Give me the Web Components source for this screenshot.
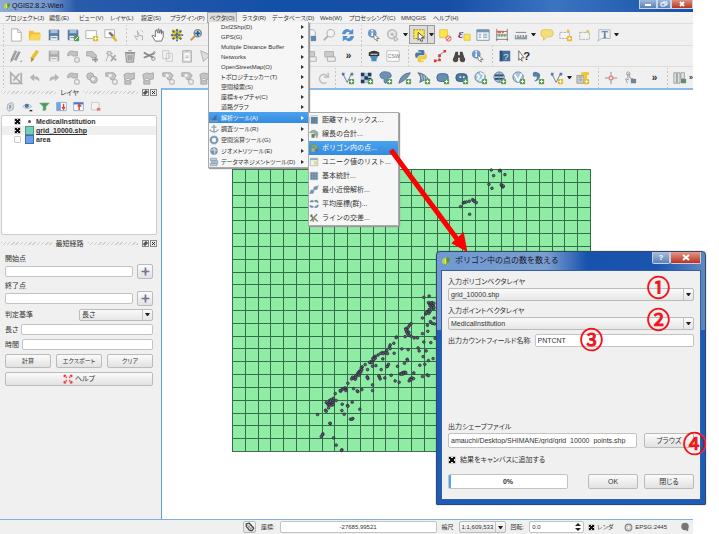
<!DOCTYPE html>
<html lang="ja">
<head>
<meta charset="utf-8">
<title>QGIS2.8.2-Wien</title>
<style>
body{margin:0;background:#fff;color:#333;font:7px/10px "Liberation Sans","Noto Sans CJK JP",sans-serif;font-feature-settings:"palt"}
</style>
</head>
<body>
<qgis-desktop></qgis-desktop>
<script>
const base = `*{box-sizing:border-box}
button,input,select{font:inherit;font-feature-settings:inherit;color:inherit;margin:0;padding:0;border:0;background:none;min-width:0;border-radius:0;outline:0}
select{appearance:none}
input[type=text],.line{background:#fff;border:1px solid #c3c3c3;border-radius:2px;padding:0 2px}
.push{background:linear-gradient(#fbfbfb,#e2e2e2);border:1px solid #bbb;border-radius:2px;display:flex;align-items:center;justify-content:center;gap:2px}
input[type=checkbox]{appearance:none;width:8px;height:8px;flex:none;background:#fff;border:1px solid #ccc;border-radius:1px}
input[type=checkbox]:checked{background:#eee linear-gradient(45deg,transparent 38%,#111 38% 62%,transparent 62%);position:relative}
input[type=checkbox]:checked::after{content:"";position:absolute;inset:0;background:linear-gradient(-45deg,transparent 38%,#111 38% 62%,transparent 62%)}
svg{display:block;flex:none}`;
function define(name, css, html) {
  const template = document.createElement('template');
  customElements.define(name, class extends HTMLElement {
    connectedCallback() {
      if (this.shadowRoot) return;
      template.innerHTML = `<style>${base}${css}</style>${typeof html === 'function' ? html(this) : html}`;
      this.attachShadow({mode: 'open'}).append(template.content.cloneNode(true));
    }
  });
}

/* ---------- icon drawings, all on a 16 x 16 box ---------- */
const plus = '<rect x="9" y="9" width="6" height="6" rx="1" fill="#5c9a58"/><path d="M12 10v4M10 12h4" stroke="#fff"/>';
const star = '<rect x="9" y="9" width="6" height="6" rx="1" fill="#e2b92c"/><path d="M12 10v4M10 12h4" stroke="#fff"/>';
const gbadge = '<rect x="10" y="10" width="5" height="5" rx="1" fill="#eee" stroke="#a2a2a2"/>';
const gblob = 'fill="#c3c3c3" stroke="#a5a5a5"';
const glass = c => `<path d="M7 9L2 14" stroke="${c}" stroke-width="2.4"/><circle cx="10" cy="6" r="4.3" fill="#eef4f8" stroke="${c}" stroke-width="1.3"/>`;
const floppy = (a, b) => `<path d="M2 2h12v12H2z" fill="${a}"/><path d="M4 2h8v4H4z" fill="${b}"/><path d="M4 9h8v5H4z" fill="#eee"/><path d="M5 11h6" stroke="${a}"/>`;
const globe = '<circle cx="7" cy="7" r="6" fill="#a9c4dc" stroke="#6585a5"/>';
const icons = {
  blank: '<path d="M3 1h7l4 4v10H3z" fill="#fff" stroke="#aaa"/><path d="M10 1v4h4" fill="none" stroke="#aaa"/>',
  folder: '<path d="M1 3h5l1 2h7v9H1z" fill="#efc036"/><path d="M4 7h11l-2 7H1z" fill="#fbd559"/>',
  save: floppy('#587ba4', '#a8c2da'),
  saveas: floppy('#587ba4', '#a8c2da') + '<rect x="9" y="9" width="6" height="6" rx="1" fill="#559d55"/><path d="M10 14l4-4" stroke="#fff"/>',
  composer: '<path d="M1 3h12v9H1z" fill="#fff" stroke="#aaa"/>' + star,
  manager: '<path d="M1 2h11v9H1z" fill="#fff" stroke="#aaa"/><path d="M6 5l5 5" stroke="#777" stroke-width="3"/><path d="M10 9l4 6" stroke="#e2b92c" stroke-width="3"/>',
  touch: '<path d="M6 14L3 9l4 1-1-7 2 5 4 1v5" fill="#eee" stroke="#aaa"/><path d="M10 2l3 3" stroke="#bbb"/>',
  hand: '<path d="M5 15L1 9l1-1 3 2V3l1-1 2 4V1h1l1 5 1-4h1v5l1-3h1v6l-2 5z" fill="#fff" stroke="#666"/>',
  panto: '<path d="M2 2h11v11H2z" fill="#f2cc2f"/><path d="M8 1v14M1 8h14M3 3l3 3M13 3l-3 3M3 13l3-3M13 13l-3-3" stroke="#416c9b" stroke-width="2" stroke-dasharray="3 1"/>',
  zoomin: glass('#c69849') + '<circle cx="10" cy="6" r="4" fill="#dceaf4" stroke="#5778a0"/><path d="M10 3v6M7 6h6" stroke="#235b91" stroke-width="2"/>',
  zoomlast: glass('#a8bccd') + '<path d="M9 9h6v6H9z" fill="#6288ab"/>',
  zoomgray: glass('#b5b5b5'),
  refresh: '<path d="M1 7q1-6 7-6l3 2 3-2v6H8l2-2q-3-2-5 2zM15 9q-1 6-7 6l-3-2-3 2V9h6l-2 2q3 2 5-2z" fill="#5791cc"/>',
  identify: '<circle cx="6" cy="6" r="5" fill="#6d99c5"/><path d="M6 5v4M6 2v2" stroke="#fff" stroke-width="2"/><path d="M8 7l6 5-3 0 1 3-4-3z" fill="#fff" stroke="#777"/>',
  runact: '<circle cx="7" cy="7" r="5" fill="none" stroke="#bbb" stroke-width="2"/><circle cx="7" cy="7" r="2" fill="#bbb"/><path d="M9 9l5 4-4 2z" fill="#ddd" stroke="#aaa"/>',
  select: '<path d="M2 2h12v10H2z" fill="#ffe752" stroke="#8c7b34" stroke-dasharray="2 1"/><path d="M7 5l7 6-3 0 1 4-2 0-1-3-2 2z" fill="#fff" stroke="#444"/>',
  desel: '<path d="M2 2h9v9H2z" fill="#ffe44a" stroke="#ddc449"/><circle cx="12" cy="12" r="3" fill="#f4d5d0" stroke="#dd5b55"/><path d="M10 14l4-4" stroke="#dd5b55"/>',
  expr: '<path d="M8 7h7v7H8z" fill="#ffe44a" stroke="#ddc449"/><text x="1" y="11" font-family="Liberation Serif" font-style="italic" font-weight="bold" font-size="15" fill="#664071">ε</text>',
  table: '<path d="M1 2h14v12H1z" fill="#fff" stroke="#6d8ba5"/><path d="M1 2h14v3H1z" fill="#7396b3"/><path d="M3 7h3M8 7h5M3 9h3M8 9h5M3 11h3M8 11h5" stroke="#7898b4"/>',
  abacus: '<path d="M2 1v14M14 1v14M2 4h12M2 8h12M1 13h14" stroke="#777"/><path d="M4 3v3M6 3v3M9 3v3" stroke="#e35b54" stroke-width="2"/><path d="M5 7v3M8 7v3M11 7v3" stroke="#68ad67" stroke-width="2"/>',
  ruler: '<path d="M1 8h14v5H1z" fill="#8e9ba4"/><path d="M3 8v3M6 8v2M9 8v3M12 8v2" stroke="#fff"/><path d="M2 5h12" stroke="#777"/>',
  tip: '<path d="M4 2h8q3 0 3 4t-3 4H8l-4 4v-4q-3 0-3-4t3-4z" fill="#f7df77" stroke="#dbc058"/>',
  bookm: '<path d="M1 5h11v7H1z" fill="#f3f3f3" stroke="#aaa" stroke-dasharray="3 1"/><path d="M9 2h3v3H9z" fill="#e4c14a"/>' + star,
  books: '<path d="M2 5h11v8H2z" fill="#f3f3f3" stroke="#aaa" stroke-dasharray="3 1"/><path d="M10 2l3 1-1 3-3-1z" fill="#e4c14a"/>',
  text: '<path d="M2 2h13v10H5l-4 3 1-3z" fill="#edf2f7" stroke="#a8b2bd"/><text x="5" y="11" font-family="Liberation Serif" font-weight="bold" font-size="11" fill="#597591">T</text>',
  pencils: '<path d="M3 13L8 2M7 13L12 3" stroke="#a0a0a0" stroke-width="3"/><path d="M2 15l1-3M13 14h2" stroke="#777"/>',
  pencil: '<path d="M4 12L11 2" stroke="#e5c330" stroke-width="4"/><path d="M3 15l1-5 3 2z" fill="#a88645"/>',
  gsave: floppy('#aaa', '#ccc'),
  gadd: `<path d="M2 5q2-4 8-2h3v5H8q-2-3-6 0z" ${gblob}/>` + gbadge,
  gmove: `<path d="M2 3h7l4 4v3H8L5 8H2z" ${gblob}/><path d="M8 12h7M12 9v6" stroke="#999" stroke-width="2"/>`,
  gnode: '<path d="M2 5h8M6 5L2 14M6 5l7 8" stroke="#aaa" fill="none"/><path d="M4 3h4v4H4z" fill="#ddd" stroke="#aaa"/><path d="M8 8l6 5M13 7l-5 7" stroke="#aaa" stroke-width="2"/>',
  trash: '<path d="M3 5h10l-1 10H4z" fill="#ccc" stroke="#888"/><path d="M2 4h12M6 2h4M6 7v6M8 7v6M10 7v6" stroke="#888"/>',
  cut: '<path d="M2 4l11 6M2 10l12-5" stroke="#888" stroke-width="2"/><circle cx="13" cy="11" r="2" fill="none" stroke="#888"/><circle cx="14" cy="4" r="1" fill="none" stroke="#888"/>',
  copy: '<path d="M2 2h7v9H2zM6 5h7v9H6z" fill="#f3f3f3" stroke="#c2c2c2"/><path d="M8 8h3M8 10h3" stroke="#ccc"/>',
  paste: '<path d="M3 2h10v13H3z" fill="#ddd" stroke="#aaa"/><path d="M5 5h6v8H5z" fill="#fff"/><path d="M6 2h4M6 8h4M6 10h4" stroke="#aaa"/>',
  gtri: '<path d="M2 2l11 5-8 7z" fill="#ddd" stroke="#aaa"/><path d="M12 2v12" stroke="#aaa"/>',
  label: '<path d="M2 3h10v6H2z" fill="#ccc" stroke="#aaa"/><path d="M5 9h9v5H5z" fill="#eee" stroke="#aaa"/>',
  db: '<path d="M2 4q6-4 12 0v4H2z" fill="#373737"/><path d="M3 8h10l-2 3v3H5v-3z" fill="#4a8bbd"/><path d="M4 6h8" stroke="#fff"/>',
  csw: '<path d="M1 2h14v12H1z" fill="#fff" stroke="#bbb"/><text x="2" y="10" font-family="Liberation Sans" font-size="6" fill="#777">CSW</text>',
  python: '<path d="M5 1h5q2 0 2 2v4H7q-3 0-3 3H2q-2-5 1-6h5V3H5z" fill="#4979a8"/><path d="M11 15H6q-2 0-2-2v-2q0-3 3-3h5V5h2q2 5-1 7H8v1h3z" fill="#f0cb48"/>',
  nodes: '<path d="M2 13h5V7l6-4" stroke="#668cb1" fill="none"/><path d="M1 12h3v3H1zM6 11h3v3H6zM6 6h3v3H6zM12 1h3v3h-3z" fill="#e03932"/>',
  binoc: '<path d="M4 3h3v4h2V3h3l3 10H9v-3H7v3H1z" fill="#474747"/><circle cx="4" cy="12" r="3" fill="#574841"/><circle cx="12" cy="12" r="3" fill="#574841"/>',
  help: '<path d="M2 2h12v12H2z" fill="#456f9b"/><path d="M2 2h3v12H2z" fill="#2c4e78"/><text x="6" y="12" font-family="Liberation Sans" font-size="11" fill="#d6e4f1">?</text>',
  whats: '<path d="M2 2l6 8H5l1 4-3-3-1 2z" fill="#fff" stroke="#666"/><text x="7" y="13" font-family="Liberation Sans" font-weight="bold" font-size="13" fill="#333">?</text>',
  gtriang: '<path d="M2 2v12h12z" fill="none" stroke="#b0b0b0" stroke-width="2"/><path d="M12 3L5 11M14 2v12" stroke="#b0b0b0" stroke-width="2"/>',
  undo: '<path d="M2 7l5-4v3q7 0 6 6-2-3-6-3v3z" fill="#b7b7b7"/>',
  redo: '<path d="M14 7L9 3v3q-7 0-6 6 2-3 6-3v3z" fill="#b7b7b7"/>',
  grings: `<circle cx="6" cy="6" r="4" ${gblob}/><circle cx="10" cy="10" r="4" ${gblob}/><circle cx="9" cy="9" r="2" fill="#eee"/>`,
  gpart: `<path d="M2 2h9l3 3-3 5H8L6 6H2z" ${gblob}/><circle cx="7" cy="5" r="2" fill="#eee"/>` + gbadge,
  gshape: `<path d="M1 4q4-3 8-1l4-1v7l-5 1q-1-3-6 0zM2 11h7v4H2z" ${gblob}/>`,
  gredo: '<path d="M12 13A5 5 0 1 1 13 6M14 2v5H9" fill="none" stroke="#c2c2c2" stroke-width="2"/>',
  vadd: '<path d="M2 3l5 10 5-10" fill="none" stroke="#57789b"/><path d="M1 2h3v3H1zM11 2h3v3h-3z" fill="#57789b"/>' + plus,
  radd: '<path d="M1 2h12v12H1z" fill="#b2cbdf"/><path d="M1 2h4v4H1zM9 2h4v4H9zM5 6h4v4H5zM1 10h4v4H1zM9 8h4v3H9z" fill="#243e5c"/>' + plus,
  pgadd: '<path d="M1 4q2-4 7-3 6 0 6 5-1 3-4 2l-2 6q-3 0-2-5-5 0-5-5z" fill="#6b91b5" stroke="#50779f"/>' + plus,
  feather: '<path d="M1 14Q3 3 14 2 11 9 3 13z" fill="#7293b2" stroke="#4e6c89"/>' + plus,
  mssql: '<path d="M1 2q9 1 13 9-6-2-11 2 3-6-2-11z" fill="#718fac" stroke="#4e6c89"/><path d="M5 4l1 6M8 5l1 6M11 6v5" stroke="#b9cad9"/>' + plus,
  oracle: '<rect x="1" y="3" width="13" height="9" rx="4" fill="#648db7" stroke="#3e658c"/>' + plus,
  oracle2: '<rect x="1" y="3" width="13" height="9" rx="4" fill="#49759f" stroke="#365c80"/><path d="M5 6h2v2H5zM9 6h2v2H9z" fill="#dce9f4"/>' + plus,
  wms: globe + '<path d="M3 4l3 2-2 4M7 2l4 2-1 5-4 2" fill="none" stroke="#f2f7fb" stroke-width="2"/>' + plus,
  wcs: globe + '<path d="M2 5h10M2 9h10" stroke="#2b4a6c" stroke-width="2"/><path d="M7 1v12" stroke="#6585a5"/>' + plus,
  wfs: globe + '<path d="M3 4l4 7 4-8" fill="none" stroke="#fff" stroke-width="2"/>' + plus,
  comma: '<path d="M4 11Q8 9 6 6 2 8 2 4t4-3q6 1 4 6-1 4-6 5z" fill="#587fa7"/>' + plus,
  vnew: '<path d="M2 3l5 10 5-10" fill="none" stroke="#57789b"/><path d="M1 2h3v3H1zM11 2h3v3h-3z" fill="#57789b"/>' + star,
  grass: '<path d="M1 5h8v9H1z" fill="#ccc" stroke="#999"/><path d="M3 7h4M3 10h4" stroke="#aaa" stroke-width="2"/><path d="M6 3h9M11 1v9" stroke="#ecc925" stroke-width="3"/>' + star,
  cross: '<path d="M8 1v14M1 8h14" stroke="#888"/><path d="M6 6h4v4H6z" fill="#f8dddd" stroke="#df6964"/>',
  finger: '<path d="M5 14L3 9l3 1-1-6 2-1 1 5 4 1v4" fill="#eee" stroke="#999"/><circle cx="6" cy="3" r="2" fill="none" stroke="#999"/><path d="M9 9h6v5H9z" fill="#69859f"/>',
  panel: '<path d="M1 2h3v12H1zM5 2h3v12H5zM9 2h4v7H9z" fill="#dfe3e5" stroke="#999"/><path d="M9 9h6v5H9z" fill="#5d9170"/>',
  layers: '<path d="M4 5l6-3 2 2v8l-6 3-3-3z" fill="#dce2e7" stroke="#8796a3"/><path d="M6 6v6l3-2V5z" fill="#8ca0b2"/>',
  eye: '<path d="M1 8q7-7 13 0-6 6-13 0z" fill="#d9e2ea" stroke="#9caab6"/><circle cx="7" cy="7" r="3" fill="#54769b"/><path d="M11 14h4" stroke="#222" stroke-width="2"/>',
  funnel: '<path d="M1 3h14L10 8v5l-4 1V8z" fill="#4a9b62" stroke="#72ad7f"/>',
  expand: '<path d="M1 2h14v12H1z" fill="#fff" stroke="#7392c3"/><path d="M1 2h6v12H1z" fill="#77a0e4"/><path d="M11 4v8M9 9l2 3 2-3" stroke="#e34525" stroke-width="2"/>',
  collapse: '<path d="M1 2h14v12H1z" fill="#fff" stroke="#7392c3"/><path d="M1 2h14v3H1z" fill="#477ade"/><path d="M9 5v8M7 8l2-3 3 3" stroke="#e34525" stroke-width="2"/>',
  remove: '<path d="M2 2h11v11H2z" fill="#f4f4f4" stroke="#bbb"/><path d="M10 10h5v4h-5z" fill="#ec716c"/>',
  grid: '<path d="M2 2h12v12H2z" fill="#63829c" stroke="#9fb6c8"/><path d="M2 6h12M2 10h12M6 2v12M10 2v12" stroke="#8fa9bd"/>',
  matrix: '<path d="M3 3h11v11H3z" fill="#62839e"/><path d="M1 2v12M2 1h12" stroke="#9db0bf"/>',
  lines: '<path d="M1 6q2-5 8-4l5 3v5H9V6z" fill="#9db1a4" stroke="#7a9484"/><path d="M4 8h5v6H4z" fill="#648663"/><path d="M11 9h3v5h-3z" fill="#9ba9b5"/>',
  points: '<path d="M1 6q2-5 8-4l5 3v5H9V6z" fill="#8aab82" stroke="#688864"/><path d="M4 8h5v6H4z" fill="#b8b05c"/><path d="M11 9h3v5h-3z" fill="#58748b"/>',
  list: '<path d="M2 2h12v12H2z" fill="#f2f2ea" stroke="#91a5b4"/><path d="M2 2h12v3H2z" fill="#94aaba"/><path d="M8 7h5v5H8z" fill="#efd976"/>',
  near: '<path d="M1 14l2-6 4 0 1-5 7-2-2 6-5 1-1 5z" fill="#7291aa" stroke="#90a8ba"/>',
  mean: '<path d="M2 5q3-4 5 0M9 4q4-3 5 2M2 10q1 4 5 2M9 13q5 0 5-4" stroke="#7391aa" stroke-width="3" fill="none"/>',
  inter: '<path d="M2 13L13 2M2 4l12 9M4 2l3 12" stroke="#6d7769" stroke-width="2"/><path d="M5 8h7M8 5v7" stroke="#bea544"/>',
  anal: '<path d="M2 14L12 2v12z" fill="#456f96"/><path d="M1 13h13" stroke="#86a9c6" stroke-width="2"/>',
  research: '<path d="M8 1v12M4 5h8M1 9q7 8 14 0" stroke="#8ba3b6" stroke-width="2" fill="none"/>',
  gear: '<circle cx="8" cy="8" r="5" fill="none" stroke="#7c98ae" stroke-width="3"/><circle cx="8" cy="8" r="7" fill="none" stroke="#7c98ae" stroke-dasharray="2 2"/>',
  geom: '<circle cx="8" cy="8" r="6" fill="#7895ac"/><path d="M3 6h6v6M7 3l5 5" stroke="#c8d5df" stroke-width="2" fill="none"/>',
  data: '<path d="M2 2h10v4H2zM4 6h10v4H4zM2 10h11v4H2z" fill="#b9cbd8" stroke="#7a98ae"/>',
  target: '<path d="M8 1v14M1 8h14" stroke="#4f81b0" stroke-width="3"/><path d="M6 6h4v4H6z" fill="#e0524c"/>',
  lifebuoy: '<path d="M2 2l4 4M14 2l-4 4M2 14l4-4M14 14l-4-4" stroke="#e34545" stroke-width="3" stroke-dasharray="3 1"/><path d="M2 5V2h3M11 2h3v3M2 11v3h3M11 14h3v-3" fill="none" stroke="#e34545" stroke-width="2"/>',
  qgis: '<path d="M2 12q-2-9 7-10l-1 5 4 7-5-1z" fill="#b7d540"/><path d="M9 2q6 0 5 5-3 4-6 8V9z" fill="#5b972b"/><path d="M7 5l1 7" stroke="#f4e36b" stroke-width="2"/>',
  mouse: '<path d="M2 3l5-1 7 8-3 4-4-1-5-6z" fill="#eee" stroke="#444" stroke-width="2"/><path d="M5 9l5-5M8 12l5-5M4 5l7 7" stroke="#555"/>',
  crs: '<circle cx="8" cy="8" r="6" fill="#ddd" stroke="#888" stroke-width="2"/><circle cx="8" cy="8" r="3" fill="#fff" stroke="#999"/>',
  bubble: '<circle cx="8" cy="7" r="6" fill="#777"/><path d="M8 12l5 3v-5z" fill="#777"/>'
};
const svg = (name, size) => `<svg width="${size}" height="${size}" viewBox="0 0 16 16" fill="none" overflow="visible" aria-hidden="true">${icons[name]}</svg>`;
const caret = '<svg width="5" height="3" viewBox="0 0 5 3" aria-hidden="true"><path d="M0 0h5L3 3H2z" fill="#222"/></svg>';

/* ---------- tool bars: "." opens a caret, "~" a spring, ">" and "|" the overflow marks ---------- */
define('tool-group', `:host{display:flex;align-items:center;padding-left:6px;height:20px;min-width:0;
background:radial-gradient(circle,#c4c4c4 1px,transparent 1px) 2px 2px/3px 4px repeat-y}
button{width:19px;height:19px;display:flex;align-items:center;justify-content:center;flex:none}
.c{width:7px}.s{flex:1}.o{font-size:10px;font-weight:bold}.e{width:4px;font-size:7px;font-weight:bold}
.on{background:#ddd;border:1px solid #999}.on+.c{background:#ddd;border:1px solid #999;border-left:0}`,
  el => el.getAttribute('items').split(' ').map(n =>
    n === '.' ? `<button class="c" aria-label="メニュー">${caret}</button>` :
    n === '~' ? '<span class="s"></span>' :
    n === '>' ? '<button class="o">»</button>' :
    n === '|' ? '<button class="e">»</button>' :
    `<button class="${n === 'select' ? 'on' : ''}" aria-label="${n}">${svg(n, 14)}</button>`).join(''));
define('tool-bars', `:host{display:block;background:#f0f0f0}
div{display:grid;border-top:1px solid #ddd;height:22px;align-items:center}.b{height:21px}
.a{grid-template-columns:123px 235px 1fr}
.b{grid-template-columns:358px 47px 84px 1fr}
.c{grid-template-columns:332px 263px 69px 1fr}`, `
<div class="a"><tool-group items="blank folder save saveas composer manager"></tool-group>
<tool-group items="touch hand panto zoomin zoomin zoomgray zoomgray zoomgray zoomgray zoomlast zoomgray refresh"></tool-group>
<tool-group items="identify runact . select . desel expr table abacus ruler . tip bookm books text ."></tool-group></div>
<div class="b"><tool-group items="pencils pencil gsave gadd gmove gnode trash cut copy paste gtri ~ label label >"></tool-group>
<tool-group items="db csw"></tool-group><tool-group items="python nodes binoc identify"></tool-group><tool-group items="help whats"></tool-group></div>
<div class="c"><tool-group items="gtriang undo redo gadd grings gpart gshape gshape gpart gpart gshape ~ gredo"></tool-group>
<tool-group items="vadd radd pgadd feather mssql oracle oracle2 wms wcs wfs comma vnew . grass"></tool-group>
<tool-group items="cross finger ~ >"></tool-group><tool-group items="panel |"></tool-group></div>`);

define('title-bar', `:host{display:flex;align-items:center;height:12px;padding-left:3px;gap:1px;color:#112;
background:linear-gradient(90deg,#8fabd6,#7095cc 50px,#2a5bab 76px,#1450a8 40%,#174fa6 65%,#3b74c0 80%,#1651a6)}
span{flex:1}nav{display:flex;align-self:flex-start}
button{width:18px;height:9px;border:1px solid #cbd5e5;border-top:0;background:linear-gradient(#9fb9dd,#587fb7);display:flex;align-items:center;justify-content:center}
button:nth-child(2){width:14px}button:last-child{width:22px;background:linear-gradient(#dd8e7e,#bd3324)}`,
`${svg('qgis', 8)}<span>QGIS2.8.2-Wien</span><nav>
<button aria-label="最小化"><svg width="8" height="6"><path d="M1 4h6" stroke="#fff" stroke-width="2"/></svg></button>
<button aria-label="元に戻す"><svg width="8" height="6"><path d="M1 2h4v3H1zM3 2V1h4v3H5" fill="none" stroke="#fff"/></svg></button>
<button aria-label="閉じる"><svg width="8" height="6"><path d="M2 1l4 4M6 1L2 5" stroke="#fff" stroke-width="2"/></svg></button></nav>`);

define('menu-bar', `:host{display:grid;grid-template-columns:44px 30px 31px 31px 29px 38px 34px 30px 48px 29px 52px 32px 1fr;height:11px;padding-left:4px;background:#f2f2f2;font-size:6px}
button{text-align:left;white-space:nowrap;line-height:10px;padding-left:1px}
.on{background:#ddd;border:1px solid #aaa;border-bottom:0;width:30px;line-height:9px;text-align:center;padding:0}`,
['プロジェクト(J)','編集(E)','ビュー(V)','レイヤ(L)','設定(S)','プラグイン(P)','ベクタ(O)','ラスタ(R)','データベース(D)','Web(W)','プロセッシング(C)','MMQGIS','ヘルプ(H)']
.map(t => `<button class="${t === 'ベクタ(O)' ? 'on' : ''}">${t}</button>`).join(''));

/* ---------- menus ---------- */
const menuCss = `:host{display:block;background:#f6f6f6;border:1px solid #aaa;box-shadow:1px 1px 1px #999}
button{display:flex;align-items:center;width:100%;text-align:left;white-space:nowrap}
i{width:12px;flex:none;display:flex}span{flex:1}.on{background:linear-gradient(#4ba3ef,#348ade);color:#fff}`;
define('vector-menu', menuCss + `:host{border-top:0;font-size:6px}button{height:10px;padding-right:4px}.t{height:11px}`,
[['Dxf2Shp(D)'],['GPS(G)'],['Multiple Distance Buffer'],['Networks'],['OpenStreetMap(O)'],['トポロジチェッカー(T)'],['空間検索(S)'],['座標キャプチャ(C)'],['道路グラフ'],
['解析ツール(A)','anal'],['調査ツール(R)','research'],['空間演算ツール(G)','gear'],['ジオメトリツール(E)','geom'],['データマネジメントツール(D)','data']]
.map(([t, n]) => `<button class="${n ? 't' : ''} ${n === 'anal' ? 'on' : ''}"><i>${n ? svg(n, 10) : ''}</i><span>${t}</span><svg width="3" height="4"><path d="M0 0l3 2-3 2z" fill="currentColor"/></svg></button>`).join(''));
define('analysis-menu', menuCss + `:host{font-feature-settings:normal}button{height:14px}i{width:13px}`,
[['距離マトリックス...','matrix'],['線長の合計...','lines'],['ポリゴン内の点...','points'],['ユニーク値のリスト...','list'],['基本統計...','grid'],['最小近傍解析...','near'],['平均座標(群)...','mean'],['ラインの交差...','inter']]
.map(([t, n]) => `<button class="${n === 'points' ? 'on' : ''}"><i>${svg(n, 10)}</i><span>${t}</span></button>`).join(''));

/* ---------- left docks ---------- */
define('dock-title', `:host{display:flex;align-items:center;height:9px;gap:4px}
i{flex:1;height:3px;background:repeating-linear-gradient(135deg,#cfcfcf 0 1px,transparent 1px 3px)}
nav{display:flex;gap:1px}button{width:7px;height:7px;border:1px solid #888;background:#eee}svg{width:5px;height:5px}`,
`<i></i><slot></slot><i></i><nav><button aria-label="切り離す"><svg><path d="M1 2h2v2H1zM2 1h2v2" fill="none" stroke="#222"/></svg></button>
<button aria-label="閉じる"><svg><path d="M1 1l3 3M4 1L1 4" stroke="#222"/></svg></button></nav>`);
define('layer-dock', `:host{display:block}
nav{display:flex;gap:3px;padding:4px 2px;height:18px}nav button{width:14px;height:11px;display:flex;align-items:center;justify-content:center}
ul{list-style:none;margin:0;padding:1px 0 0;height:120px;background:#fff;border:1px solid #ccc;border-radius:2px;font-weight:bold}
li{height:9px;display:flex;align-items:center;padding-left:12px;gap:4px;line-height:9px}
li.on{background:#efefef;text-decoration:underline}label{display:flex;align-items:center;gap:2px}
b{width:9px;height:9px;border:1px solid #56947e;background:#72cfb9}.ar{background:#689df0;border-color:#446da5}
.pt{width:3px;height:3px;border-radius:50%;background:#545063;margin:3px;border:0}input[type=checkbox]{width:7px;height:7px}`,
`<dock-title>レイヤ</dock-title><nav>${['layers','eye','funnel','expand','collapse','remove'].map(n => `<button aria-label="${n}">${svg(n, 11)}</button>`).join('')}</nav>
<ul><li><input id="m" type="checkbox" checked><label for="m"><b class="pt"></b>MedicalInstitution</label></li>
<li class="on"><input id="g" type="checkbox" checked><label for="g"><b></b>grid_10000.shp</label></li>
<li><input id="a" type="checkbox"><label for="a"><b class="ar"></b>area</label></li></ul>`);
define('drop-down', `:host{display:flex;align-items:center;height:13px;position:relative;border:1px solid #bbb;border-radius:2px;background:linear-gradient(#fafafa,#e6e6e6)}
select{width:100%;height:100%;padding-left:2px}svg{position:absolute;right:2px}
:host::after{content:"";position:absolute;right:9px;top:0;bottom:0;border-left:1px solid #c4c4c4}`,
  el => `<select aria-label="${el.getAttribute('label')}"><option>${el.getAttribute('value')}</option></select>${caret}`);
define('path-dock', `:host{display:block}
form{display:grid;padding:5px 4px 0;margin:0}
.p{display:grid;grid-template-columns:1fr 16px;column-gap:4px;height:27px;align-content:start}
.p label{grid-column:1/3;height:11px;line-height:12px}.p input{height:11px;align-self:center}.p button{height:15px}
.r{display:flex;align-items:center;height:15px;gap:3px}.r input{flex:1;height:11px}.r drop-down{width:74px;height:12px;margin-left:auto}
.k{display:grid;grid-template-columns:repeat(3,1fr);gap:5px;margin-top:2px;font-size:6px}.k button,.h{height:14px}.h{margin-top:4px}`,
`<dock-title>最短経路</dock-title><form>
<div class="p"><label for="s">開始点</label><input id="s" type="text"><button type="button" class="push" aria-label="開始点を取得">${svg('target', 9)}</button></div>
<div class="p"><label for="e">終了点</label><input id="e" type="text"><button type="button" class="push" aria-label="終了点を取得">${svg('target', 9)}</button></div>
<div class="r"><span>判定基準</span><drop-down label="判定基準" value="長さ"></drop-down></div>
<div class="r"><label for="l">長さ</label><input id="l" type="text"></div>
<div class="r"><label for="t">時間</label><input id="t" type="text"></div>
<div class="k"><button type="button" class="push">計算</button><button type="button" class="push">エクスポート</button><button type="button" class="push">クリア</button></div>
<button type="button" class="push h">${svg('lifebuoy', 10)}ヘルプ</button></form>`);

/* ---------- map ---------- */
/* Point positions in thirds of a map unit, measured from a local origin. */
const westPoints = [597,-8,613,-12,611,8,614,12,618,9,622,13,616,18,625,17,620,24,626,26,613,29,608,36,612,40,603,42,605,38,616,34,622,8,627,10,627,22,
593,54,628,54,617,65,622,70,629,72,608,76,609,94,593,101,559,71,554,76,550,82,543,86,547,91,545,96,552,97,549,102,543,89,541,110,553,106,559,109,568,114,578,114,515,111,514,113,
507,130,496,135,494,141,496,146,486,152,480,158,473,158,468,160,475,161,488,161,508,160,531,147,550,149,580,144,583,153,604,153,597,126,618,128,631,115,
460,165,452,169,448,172,444,175,451,175,447,179,440,184,436,188,434,187,441,188,474,177,421,194,412,201,409,204,411,209,405,213,402,216,408,216,399,220,404,221,396,225,392,228,402,226,383,232,380,237,387,235,391,238,393,233,
443,199,453,197,428,209,469,209,491,193,488,199,486,200,518,199,547,178,548,182,539,190,595,170,611,182,625,176,600,193,585,196,
499,226,427,231,429,236,428,233,462,228,464,232,466,237,480,234,443,255,443,272,511,243,523,247,526,222,532,219,537,217,541,217,535,222,530,223,543,219,567,219,553,243,556,237,561,234,566,236,559,239,593,230,607,225,611,227,
369,250,361,264,363,269,363,272,355,266,352,269,347,274,346,272,331,281,326,295,386,266,399,275,397,273,411,269,304,308,309,311,314,302,319,299,324,303,314,308,319,308,324,309,310,315,315,315,320,316,325,314,334,302,317,304,311,324,302,331,304,334,382,307,352,313,368,317,369,319,351,332,358,343,405,328,278,344,377,358,384,356,381,358,316,371,315,370,294,402,293,405,289,410,326,414,334,436,351,450,350,452];
const eastPoints = [184,30,210,31,209,33,191,47,225,44,177,73,186,85,214,74,216,78,219,81,220,78,92,140,100,129,104,127,109,126,118,124,128,119,131,122,134,125,139,128,119,163];
const dots = a => a.reduce((s, v, i) => i % 2 ? s : s + `<circle cx="${v}" cy="${a[i + 1]}" r="4"/>`, '');
let lines = '';
for (let i = 0; i <= 28; i++) lines += `M${232 + Math.round(i * 358 / 28)} 169v283`;
for (let i = 0; i <= 22; i++) lines += `M232 ${169 + Math.round(i * 282 / 22)}h359`;
define('map-canvas', `:host{display:block;background:#fff;border-left:1px solid #5f9fd9;border-top:2px solid #86bbea;padding:79px 0 0 70px;min-width:0}svg{overflow:visible}`,
`<svg width="360" height="284" viewBox="232 169 360 284" role="img" aria-label="地図"><path d="M232 169h359v282H232z" fill="#8eeca5"/>
<path d="${lines}" stroke="#225638" stroke-opacity=".85" shape-rendering="crispEdges"/>
<g fill="#65617a" stroke="#23202e" stroke-width="2"><g transform="translate(225 300) scale(.333)">${dots(westPoints)}</g><g transform="translate(430 160) scale(.333)">${dots(eastPoints)}</g></g></svg>`);
define('status-bar', `:host{display:flex;align-items:center;height:14px;gap:5px;padding:0 3px 0 243px;background:#f0f0f0;white-space:nowrap;font-size:6px}
.m{width:13px;height:12px}.c{flex:1;text-align:center;height:12px}drop-down{width:47px;height:12px}.n{width:55px;height:12px;display:flex;margin-right:-1px;align-items:center;justify-content:space-between}
.n input{width:36px;border:0;padding:0}.k{display:flex;align-items:center;gap:2px}.e{display:flex;align-items:center;gap:2px;margin:0 8px 0 6px}
input[type=checkbox]{width:7px;height:7px}`,
`<button class="m push" aria-label="範囲">${svg('mouse', 10)}</button><label for="c">座標:</label><input class="c" id="c" type="text" value="-27685,99521">
<span>縮尺</span><drop-down label="縮尺" value="1:1,609,533"></drop-down><label for="r">回転:</label><span class="n line"><input id="r" type="text" value="0.0"><svg width="6" height="10"><path d="M0 4l3-3 3 3zM0 6h6L3 9z" fill="#222"/></svg></span>
<label class="k"><input type="checkbox" checked>レンダ</label><button class="e">${svg('crs', 9)}EPSG:2445</button><button aria-label="メッセージ">${svg('bubble', 10)}</button>`);

define('count-dialog', `:host{display:flex;flex-direction:column;border:1px solid #344765;border-radius:4px 4px 1px 1px;padding:0 4px 4px;
background:linear-gradient(90deg,#7099d3,#7b9dcf 110px,#1752ad 150px,#1a54ad 82%,#5e88c0);box-shadow:0 0 1px #345;position:relative}
:host::before{content:"";position:absolute;inset:78px 0 0;background:#1b5bba;border-radius:0 0 1px 1px}
header{display:flex;align-items:center;height:18px;gap:4px;color:#101828;font-size:8px;font-feature-settings:normal;position:relative}header span{flex:1;line-height:12px}
nav{display:flex;align-self:flex-start}nav button{height:12px;width:18px;border:1px solid #c5d1e2;border-top:0;background:linear-gradient(#a9bfdf,#5e82b5);color:#fff;font-weight:bold;display:flex;align-items:center;justify-content:center;border-radius:0 0 2px 2px}
nav button:last-child{width:31px;background:linear-gradient(#e09a8b,#bd3020)}
form{position:relative;margin:0;background:#f0f0f0;border:1px solid #335f9f;padding:5px 6px 7px;display:grid;height:230px;align-content:start}
form>label{height:12px;line-height:12px}drop-down{margin-bottom:4px}
.f{display:flex;align-items:center;gap:4px}.f input{flex:1;height:13px}
.o{margin-top:74px}.s{display:grid;grid-template-columns:1fr 50px;gap:7px}.s input,.s button{height:15px}
form>.c{display:flex;align-items:center;gap:4px;margin:6px 0 8px}
.b{display:grid;grid-template-columns:120px 1fr 50px 50px;column-gap:6px}.b>*{height:15px}.b .ok{grid-column:3}
.g{font-weight:bold;text-align:center;line-height:13px;background:linear-gradient(90deg,#4da3f5 2px,#fff 2px)}
.n{position:absolute;z-index:1;color:#f0141b;font:23px/24px "Noto Sans CJK JP",sans-serif;-webkit-text-stroke:1px #f0141b}
.n1{left:210px;top:22px}.n2{left:210px;top:54px}.n3{left:143px;top:74px}.n4{left:246px;top:178px}`,
`<header>${svg('qgis', 10)}<span>ポリゴン中の点の数を数える</span><nav><button aria-label="ヘルプ">?</button><button aria-label="閉じる"><svg width="8" height="7"><path d="M1 1l6 5M7 1L1 6" stroke="#fff" stroke-width="2"/></svg></button></nav></header>
<form><label>入力ポリゴンベクタレイヤ</label><drop-down label="入力ポリゴンベクタレイヤ" value="grid_10000.shp"></drop-down>
<label>入力ポイントベクタレイヤ</label><drop-down label="入力ポイントベクタレイヤ" value="MedicalInstitution"></drop-down>
<div class="f"><label for="f">出力カウントフィールド名称</label><input id="f" type="text" value="PNTCNT"></div>
<label class="o" for="o">出力シェープファイル</label><div class="s"><input id="o" type="text" value="amauchi/Desktop/SHIMANE/grid/grid_10000_points.shp"><button type="button" class="push">ブラウズ</button></div>
<label class="c"><input type="checkbox" checked>結果をキャンバスに追加する</label>
<div class="b"><div class="line g" role="progressbar" aria-valuenow="0">0%</div><button type="button" class="push ok">OK</button><button type="button" class="push">閉じる</button></div></form>
<span class="n n1">①</span><span class="n n2">②</span><span class="n n3">③</span><span class="n n4">④</span>`);

define('qgis-desktop', `:host{display:flex;flex-direction:column;min-height:100vh;padding-right:26px;position:relative;box-sizing:border-box;background:#fff}
main{flex:1;display:grid;grid-template-columns:161px 1fr;background:#f0f0f0;border-bottom:1px solid #7fb0e4}
aside{padding:0 4px 0 1px}path-dock{margin-top:4px}
vector-menu{position:absolute;left:208px;top:22px;width:101px}
analysis-menu{position:absolute;left:308px;top:112px;width:91px}
count-dialog{position:absolute;left:436px;top:251px;width:270px}
.arrow{position:absolute;left:385px;top:145px;pointer-events:none}`,
`<title-bar></title-bar><menu-bar></menu-bar><tool-bars></tool-bars>
<main><aside><layer-dock></layer-dock><path-dock></path-dock></aside><map-canvas></map-canvas></main>
<status-bar></status-bar><vector-menu></vector-menu><analysis-menu></analysis-menu><count-dialog></count-dialog>
<svg class="arrow" width="90" height="110" aria-hidden="true"><path d="M6 5l69 93" stroke="#f00" stroke-width="5"/><path d="M81 105l-13-7 10-9z" fill="#f00" stroke="#f00" stroke-width="2"/></svg>`);
</script>
</body>
</html>
